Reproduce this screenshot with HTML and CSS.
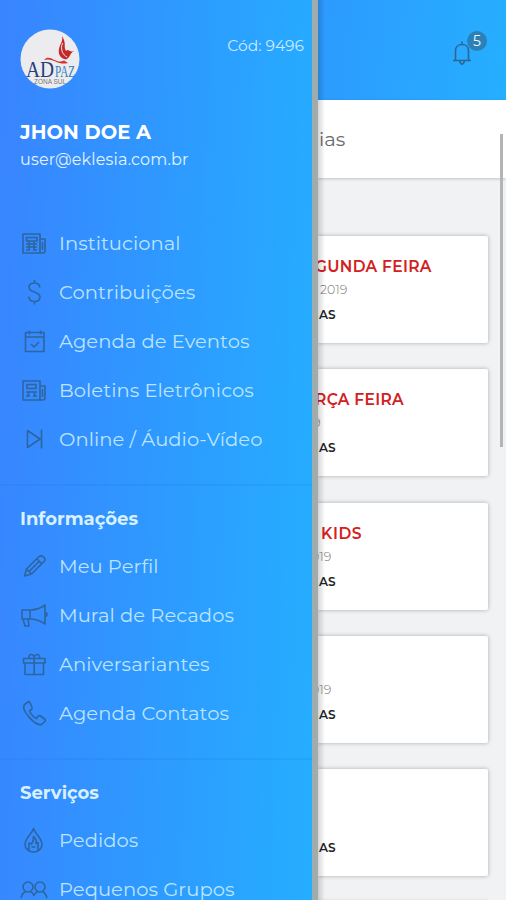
FILE: index.html
```html
<!DOCTYPE html>
<html lang="pt-br">
<head>
  <meta charset="UTF-8">
  <meta name="viewport" content="width=device-width, initial-scale=1.0">
  <title>Eklesia</title>
  <link rel="stylesheet" href="styles.css">
</head>
<body>
  <div class="app">
    <aside class="drawer">
      <div class="profile">
        <div class="profile-top">
          <svg class="avatar" viewBox="0 0 60 60">
            <circle cx="30" cy="30" r="29.5" fill="#ececef"/>
            <path d="M24 31C30 24 36 36 44 31.500Q47 33 48 34C38 37 33 28 24 31z" fill="#d0352f"/>
            <path d="M42 7C47 15 43 17 46 22C48 19 50 24 54 22C49 25 51 28 46 30.500C41 30 37 25 39.500 18C40.500 14 43 13 42 7z" fill="#c4282a"/>
            <path d="M42.500 14C40 21 43 26 47 28" fill="none" stroke="#ececef" stroke-width="1"/>
            <text x="6" y="48" class="logo-ad" textLength="28" lengthAdjust="spacingAndGlyphs">AD</text>
            <text x="35" y="48" class="logo-paz" textLength="20" lengthAdjust="spacingAndGlyphs">PAZ</text>
            <text x="14" y="55" class="logo-sub" textLength="32" lengthAdjust="spacingAndGlyphs">ZONA SUL</text>
          </svg>
          <span class="code">Cód: 9496</span>
        </div>
        <div class="name">JHON DOE A</div>
        <div class="email">user@eklesia.com.br</div>
      </div>

      <ul class="menu">
        <li>
          <svg class="icon" viewBox="0 0 28 28"><path d="M3 5h17v19H3zM20 10h5v12q0 2-2.500 2H20M22.500 13v8M6.500 8.500h10.500v3.500H6.500zM6 15h11M6 18h11M6 21h4M13 21h4M9 12v9M14 12v9"/></svg>
          <span>Institucional</span>
        </li>
        <li>
          <svg class="icon" viewBox="0 0 28 28"><path d="M20 9.500C19.500 6.500 17.500 5 14.500 5S9 6.500 9 9.500c0 5.500 11 3.500 11 9.500 0 3-2.500 4.500-5.500 4.500S9 22 8.800 18.500M14.500 2v3M14.500 23.500v3"/></svg>
          <span>Contribuições</span>
        </li>
        <li>
          <svg class="icon" viewBox="0 0 28 28"><path d="M5.500 5.500h18.500v19H5.500zM5.500 10h18.500M9.500 3.500v4M20.500 3.500v4M11 17l3 3 5-5"/></svg>
          <span>Agenda de Eventos</span>
        </li>
        <li>
          <svg class="icon" viewBox="0 0 28 28"><path d="M3 5h17v19H3zM20 10h5v12q0 2-2.500 2H20M22.500 13v8M7 8.500h9v4H7zM6 16h11M6 20h4M13 20h4M8.500 16v4M14.500 16v4"/></svg>
          <span>Boletins Eletrônicos</span>
        </li>
        <li>
          <svg class="icon" viewBox="0 0 28 28"><path d="M7.500 5.500v17L20 14zM21.500 4.500v19"/></svg>
          <span>Online / Áudio-Vídeo</span>
        </li>
      </ul>

      <h2>Informações</h2>
      <ul class="menu">
        <li>
          <svg class="icon" viewBox="0 0 28 28"><path d="M4.500 24l2-7L19 4.500q2-1.500 4.500.5t1 4L11.500 22zM6.500 17l5 5M17 7l5 5M19.500 9L9.500 19"/></svg>
          <span>Meu Perfil</span>
        </li>
        <li>
          <svg class="icon" viewBox="0 0 28 28"><path d="M2 9h9q8-.5 14-5v19q-6-4.500-14-5H2zM10 9v9M3 18l2 7h4l-1-7M25 11.500q2 0 2 2T25 15.500"/></svg>
          <span>Mural de Recados</span>
        </li>
        <li>
          <svg class="icon" viewBox="0 0 28 28"><path d="M3.500 8.500h21.500v4.500H3.500zM5 13v11.500h18.500V13M14.200 8.500v16M9 8.500Q8.500 4.500 11 4.500t3.200 2.500Q15 4.500 17.500 4.500t2 4"/></svg>
          <span>Aniversariantes</span>
        </li>
        <li>
          <svg class="icon" viewBox="0 0 28 28"><path d="M8 3L4.500 5.500C.5 11 15 27 21.500 25.500l3.500-3q1-1.500-1-3L20.500 17q-2-1-3 1l-1 1.500C14 18.500 10.500 15 9.500 12l2-1.500q1-1 .5-2.500L10 4Q9 2 8 3z"/></svg>
          <span>Agenda Contatos</span>
        </li>
      </ul>

      <h2>Serviços</h2>
      <ul class="menu">
        <li>
          <svg class="icon" viewBox="0 0 28 28"><path d="M13.500 2.500C12 8 5 12 5 18.500 5 23 9 26 13.500 26s8.500-3 8.500-7.500C22 12 15 8 13.500 2.500zM9 24.500v-7.500l2.500 1q2.500-3 2-7.500 3.500 3 2.500 7l2-1v8M11.500 21h4"/></svg>
          <span>Pedidos</span>
        </li>
        <li>
          <svg class="icon" viewBox="0 0 28 28"><circle cx="8" cy="12" r="5"/><circle cx="20" cy="12" r="5"/><path d="M1 23q1-5 5-6.500M10 16.500q3 1 4 4 1-3 4-4M22 16.500q4 1.500 5 6.500"/></svg>
          <span>Pequenos Grupos</span>
        </li>
      </ul>
    </aside>

    <main class="page">
      <header class="topbar">
        <div class="bell">
          <svg class="bell-icon" viewBox="0 0 20 26"><path d="M1 20.500h18M3.500 20.500V10.500C3.500 2.500 16.500 2.500 16.500 10.500v10M10 1.500v3M7.500 21q2.500 6.500 5 0"/></svg>
          <span class="badge">5</span>
        </div>
      </header>
      <div class="tab">ias</div>
      <div class="cards">
        <div class="card">
          <div class="title monday">GUNDA FEIRA</div>
          <div class="date">2019</div>
          <div class="place">AS</div>
        </div>
        <div class="card">
          <div class="title tuesday">RÇA FEIRA</div>
          <div class="date cut-short">9</div>
          <div class="place">AS</div>
        </div>
        <div class="card">
          <div class="title kids">KIDS</div>
          <div class="date cut">019</div>
          <div class="place">AS</div>
        </div>
        <div class="card">
          <div class="title"></div>
          <div class="date cut">019</div>
          <div class="place">AS</div>
        </div>
        <div class="card">
          <div class="title"></div>
          <div class="date"></div>
          <div class="place">AS</div>
        </div>
        <div class="card"></div>
      </div>
      <div class="scrollbar"></div>
    </main>
  </div>
</body>
</html>
```
FILE: styles.css
```css
* {
  box-sizing: border-box;
}
body {
  margin: 0;
  font-family: Montserrat, Inter, sans-serif;
  color: #fff;
}
.app {
  display: flex;
  width: 506px;
  height: 900px;
  overflow: hidden;
}
.drawer {
  width: 318px;
  flex: none;
  overflow: hidden;
  border-right: 6px solid #a0abab;
  background: linear-gradient(92deg, #3984ff 0%, #2e99ff 50%, #25aeff 100%);
}
.profile {
  height: 218px;
  padding: 29px 8px 0 20px;
}
.profile-top {
  display: flex;
  justify-content: space-between;
  height: 91px;
}
.avatar {
  width: 60px;
  height: 60px;
}
.logo-ad {
  font: 23px "Liberation Serif", serif;
  fill: #243f7d;
}
.logo-paz {
  font: 16px "Liberation Serif", serif;
  fill: #3480bb;
}
.logo-sub {
  font: 7px "Liberation Sans", sans-serif;
  fill: #777;
}
.code {
  margin-top: 7px;
  font-size: 15.5px;
  line-height: 20px;
  color: #cdeaff;
}
.name {
  font-size: 19.5px;
  font-weight: 700;
  line-height: 25px;
  letter-spacing: 0.1px;
}
.email {
  margin-top: 3px;
  font-size: 16px;
  line-height: 23px;
  letter-spacing: 0.18px;
  color: #e4f3ff;
}
.menu {
  list-style: none;
  margin: 0;
  padding: 0 0 21px 20px;
}
.menu li {
  display: flex;
  align-items: center;
  gap: 11px;
  height: 49px;
  font-size: 19.5px;
  letter-spacing: 0.06px;
  white-space: nowrap;
  color: #bce4ff;
}
.icon {
  width: 28px;
  height: 28px;
  flex: none;
  fill: none;
  stroke: #2d659f;
  stroke-width: 1.6;
  stroke-linejoin: round;
}
h2 {
  margin: 0;
  height: 57px;
  padding: 22px 0 0 20px;
  border-top: 2px solid rgba(30, 110, 200, 0.14);
  font-size: 18px;
  line-height: 22px;
  font-weight: 700;
  color: #d8f0ff;
}
.page {
  position: relative;
  flex: 1;
  overflow: hidden;
  background: #f0f2f4;
}
/* shadow cast by the open drawer */
.page::after {
  content: "";
  position: absolute;
  left: 0;
  top: 0;
  width: 7px;
  height: 100%;
  background: linear-gradient(90deg, rgba(0, 0, 0, 0.16), transparent);
}
.topbar {
  display: flex;
  justify-content: flex-end;
  height: 100px;
  padding: 40px 34px 0 0;
  background: linear-gradient(97deg, #2d9aff, #25afff);
}
.bell {
  position: relative;
  width: 20px;
  height: 26px;
}
.bell-icon {
  width: 20px;
  height: 26px;
  fill: none;
  stroke: #2e6690;
  stroke-width: 1.6;
}
.badge {
  position: absolute;
  left: 15px;
  top: -9px;
  width: 20px;
  height: 20px;
  border-radius: 50%;
  background: #2b80b8;
  font-size: 14px;
  line-height: 20px;
  text-align: center;
}
.tab {
  height: 78px;
  padding-left: 1px;
  background: #fff;
  box-shadow: 0 1px 3px rgba(0, 0, 0, 0.2);
  color: #6a6a6a;
  font-size: 19.5px;
  line-height: 79px;
  font-weight: 400;
}
.cards {
  display: flex;
  flex-direction: column;
  gap: 26.3px;
  padding: 58px 18px 0 0;
}
.card {
  height: 107px;
  flex: none;
  padding-top: 19px;
  border-radius: 0 2px 2px 0;
  background: #fff;
  box-shadow: 0 0 4px rgba(0, 0, 0, 0.3);
  white-space: nowrap;
}
.title {
  height: 22px;
  font-size: 15.5px;
  line-height: 23px;
  font-weight: 600;
  letter-spacing: 0.3px;
  color: #d32020;
}
.monday {
  margin-left: -3px;
}
.tuesday {
  margin-left: -3px;
}
.kids {
  margin-left: 3px;
  letter-spacing: 0.6px;
}
.date {
  height: 18px;
  margin: 3px 0 0 2px;
  font-size: 12.5px;
  line-height: 19px;
  font-weight: 300;
  color: #777;
}
.date.cut {
  margin-left: -7px;
}
.date.cut-short {
  margin-left: -5px;
}
.place {
  margin: 8px 0 0 1px;
  font-size: 12px;
  line-height: 18px;
  font-weight: 600;
  color: #222;
}
.scrollbar {
  position: absolute;
  right: 3px;
  top: 134px;
  width: 3px;
  height: 313px;
  background: #b2b4b6;
}
```
